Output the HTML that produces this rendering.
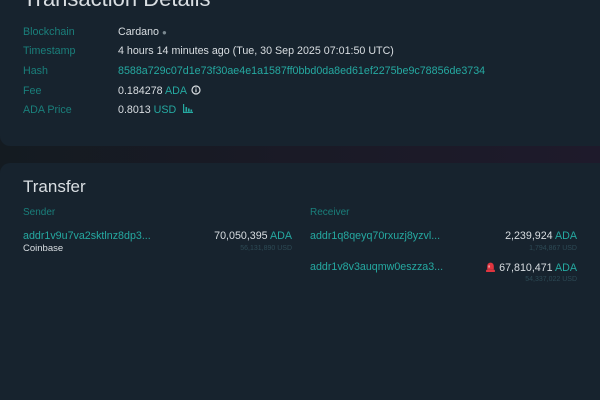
<!DOCTYPE html>
<html style="width:600px;height:400px;overflow:hidden"><head><meta charset="utf-8"><style>
*{margin:0;padding:0;box-sizing:border-box}
body{width:600px;height:400px;overflow:hidden;background:#151c22;font-family:"Liberation Sans","DejaVu Sans",sans-serif;color:#d9dee2;position:relative}
.gap{position:absolute;left:0;top:140px;width:600px;height:30px;background:linear-gradient(90deg,#141b21 0%,#1a1a26 50%,#1e1a2b 100%)}
.card{position:absolute;left:0;width:620px;background:#17232e;border-radius:10px}
.c1{top:-20px;height:166px}
.c2{top:163px;height:237px;border-radius:10px 10px 0 0}
.t{position:absolute;font-size:10.7px;white-space:nowrap;line-height:12px}
.lab{color:#1a7f7b}
.teal{color:#25a9a1}
.h1{position:absolute;left:23px;font-size:22px;color:#d9dee2;white-space:nowrap}
.usd{position:absolute;font-size:7px;color:#2d4a55;white-space:nowrap}
.r{text-align:right}
</style></head><body>
<div class="gap"></div>
<div class="card c1"></div>
<div class="card c2"></div>
<div class="h1" style="top:-14px">Transaction Details</div>
<div class="t lab" style="left:23px;top:26px">Blockchain</div>
<div class="t" style="left:118px;top:26px">Cardano <span style="color:#7a8890;font-size:8px">●</span></div>
<div class="t lab" style="left:23px;top:45px">Timestamp</div>
<div class="t" style="left:118px;top:45px">4 hours 14 minutes ago (Tue, 30 Sep 2025 07:01:50 UTC)</div>
<div class="t lab" style="left:23px;top:65px">Hash</div>
<div class="t teal" style="left:118px;top:65px">8588a729c07d1e73f30ae4e1a1587ff0bbd0da8ed61ef2275be9c78856de3734</div>
<div class="t lab" style="left:23px;top:85px">Fee</div>
<div class="t" style="left:118px;top:85px">0.184278 <span class="teal">ADA</span> <svg width="10" height="10" viewBox="0 0 10 10" style="vertical-align:-1px;margin-left:2px"><circle cx="5" cy="5" r="4" fill="none" stroke="#d9dee2" stroke-width="1.2"/><rect x="4.4" y="4.2" width="1.2" height="3" fill="#d9dee2"/><rect x="4.4" y="2.4" width="1.2" height="1.1" fill="#d9dee2"/></svg></div>
<div class="t lab" style="left:23px;top:104px">ADA Price</div>
<div class="t" style="left:118px;top:104px">0.8013 <span class="teal">USD</span> <svg width="10" height="9" viewBox="0 0 10 9" style="margin-left:4px"><path d="M0 0V9H10V7.8H1.2V0Z" fill="#25a9a1"/><rect x="2.5" y="3" width="1.6" height="4.5" fill="#25a9a1"/><rect x="5" y="4.5" width="1.6" height="3" fill="#25a9a1"/><rect x="7.5" y="5.5" width="1.6" height="2" fill="#25a9a1"/></svg></div>

<div class="h1" style="top:177px;font-size:17px">Transfer</div>
<div class="t lab" style="left:23px;top:207px;font-size:10px">Sender</div>
<div class="t lab" style="left:310px;top:207px;font-size:10px">Receiver</div>

<div class="t teal" style="left:23px;top:230px">addr1v9u7va2sktlnz8dp3...</div>
<div class="t" style="left:23px;top:243px;font-size:9.5px">Coinbase</div>
<div class="t r" style="right:308px;top:230px">70,050,395 <span class="teal">ADA</span></div>
<div class="usd" style="right:308px;top:245px">56,131,890 USD</div>

<div class="t teal" style="left:310px;top:230px">addr1q8qeyq70rxuzj8yzvl...</div>
<div class="t r" style="right:23px;top:230px">2,239,924 <span class="teal">ADA</span></div>
<div class="usd" style="right:23px;top:245px">1,794,867 USD</div>

<div class="t teal" style="left:310px;top:261px">addr1v8v3auqmw0eszza3...</div>
<div class="t r" style="right:23px;top:261px"><svg width="11" height="11" viewBox="0 0 10 10" style="vertical-align:-1px;margin-right:3px"><path d="M2 8V4.5A3 3 0 0 1 8 4.5V8Z" fill="#e0353f"/><rect x="1" y="8" width="8" height="2" fill="#e0353f"/><rect x="3.2" y="4" width="1" height="2" fill="#fff" opacity=".8"/></svg>67,810,471 <span class="teal">ADA</span></div>
<div class="usd" style="right:23px;top:276px">54,337,022 USD</div>
</body></html>
